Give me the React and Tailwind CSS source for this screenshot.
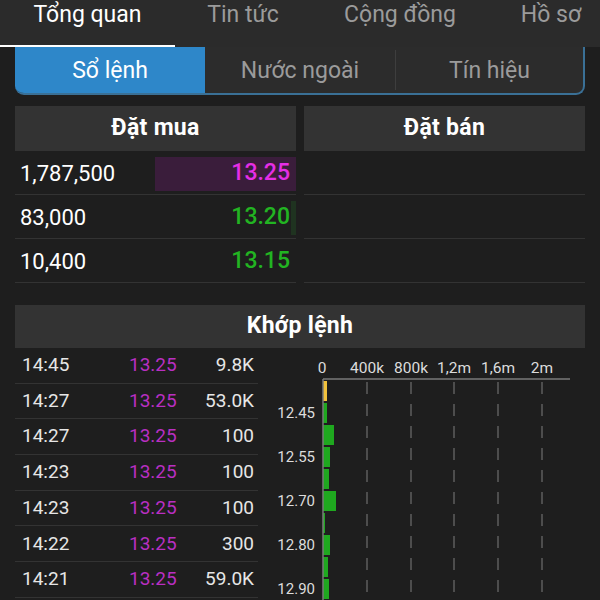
import React from "react";

const navTabs = [
  { label: "Tổng quan", w: "w-[175px]", active: true },
  { label: "Tin tức", w: "w-[136px]" },
  { label: "Cộng đồng", w: "w-[178px]" },
  { label: "Hồ sơ", w: "w-[124px]" },
];

const trades = [
  ["14:45", "13.25", "9.8K"],
  ["14:27", "13.25", "53.0K"],
  ["14:27", "13.25", "100"],
  ["14:23", "13.25", "100"],
  ["14:23", "13.25", "100"],
  ["14:22", "13.25", "300"],
  ["14:21", "13.25", "59.0K"],
];

function Chart() {
  const ticks = [
    ["0", 64],
    ["400k", 109],
    ["800k", 153],
    ["1,2m", 196],
    ["1,6m", 240],
    ["2m", 284],
  ];
  const widths = [4, 4, 11, 7, 6, 13, 2, 7, 5, 6];
  const labels = { 1: "12.45", 3: "12.55", 5: "12.70", 7: "12.80", 9: "12.90" };
  return (
    <svg width="342" height="253" viewBox="0 0 342 253" className="block">
      {ticks.map(([t, x]) => (
        <text key={t} x={x} y={25} textAnchor="middle" fontSize="15.5" fill="#dcdcdc" fontFamily="Roboto, sans-serif">
          {t}
        </text>
      ))}
      <line x1="65" y1="31" x2="312" y2="31" stroke="#7a7a7a" strokeWidth="1.5" />
      {ticks.slice(1).map(([t, x]) => (
        <line key={t} x1={x} y1="34" x2={x} y2="253" stroke="#5e5e5e" strokeWidth="1.5" strokeDasharray="12 10" />
      ))}
      {widths.map((w, i) => (
        <rect
          key={i}
          x="65"
          y={33 + i * 22}
          width={w}
          height="20"
          fill={i === 0 ? "#f2c23c" : "#1fa81f"}
        />
      ))}
      <line x1="65" y1="31" x2="65" y2="253" stroke="#7a7a7a" strokeWidth="1.5" />
      {Object.entries(labels).map(([i, t]) => (
        <text
          key={t}
          x="57"
          y={33 + Number(i) * 22 + 15}
          textAnchor="end"
          fontSize="15"
          fill="#dcdcdc"
          fontFamily="Roboto, sans-serif"
        >
          {t}
        </text>
      ))}
    </svg>
  );
}

export default function App() {
  return (
    <div className="w-[600px] h-[600px] overflow-hidden bg-[#1e1e1e] font-['Roboto',sans-serif] text-white">
      {/* top nav */}
      <div className="h-[47px] bg-[#2b2b2b] flex overflow-hidden">
        {navTabs.map((t) => (
          <div key={t.label} className={`${t.w} shrink-0 h-[47px] flex flex-col`}>
            <div
              className={`h-[45px] text-center text-[23px] leading-[29px] ${
                t.active ? "text-white" : "text-[#9b9b9b]"
              }`}
            >
              {t.label}
            </div>
            <div className={`h-[2px] ${t.active ? "bg-white" : ""}`} />
          </div>
        ))}
      </div>

      {/* segmented control */}
      <div className="mx-[15px] h-[48px] flex rounded-b-[9px] overflow-hidden bg-[#2c2c2c] border-r-2 border-b-2 border-[#3a7096]">
        <div className="w-[190px] bg-[#2e87c9] flex items-center justify-center pt-[3px] text-[23px] text-white">
          Sổ lệnh
        </div>
        <div className="w-[190px] flex items-center justify-center pt-[3px] text-[23px] text-[#9b9b9b]">
          Nước ngoài
        </div>
        <div className="w-[1px] my-[3px] bg-[#3e3e3e]" />
        <div className="flex-1 flex items-center justify-center pt-[3px] text-[23px] text-[#9b9b9b]">
          Tín hiệu
        </div>
      </div>

      {/* order book */}
      <div className="mx-[15px] mt-[11px] grid grid-cols-2 gap-x-[8px]">
        <div>
          <div className="h-[45px] bg-[#333333] flex items-center justify-center text-[23px] font-bold tracking-[0.3px]">
            Đặt mua
          </div>
          <div className="h-[44px] border-b border-[#333333] flex items-center justify-between pt-[2px]">
            <span className="pl-[5px] text-[22px]">1,787,500</span>
            <div className="w-[141px] h-[34px] bg-[#3a1d3b] flex items-center justify-end pr-[6px] text-[23px] font-medium text-[#e62ee6]">
              13.25
            </div>
          </div>
          <div className="h-[44px] border-b border-[#333333] flex items-center justify-between pt-[2px]">
            <span className="pl-[5px] text-[22px]">83,000</span>
            <div className="h-[34px] flex items-center">
              <span className="text-[23px] font-medium text-[#22b422] pr-[1px]">13.20</span>
              <div className="w-[5px] h-[34px] bg-[#1f3320]" />
            </div>
          </div>
          <div className="h-[44px] border-b border-[#333333] flex items-center justify-between pt-[2px]">
            <span className="pl-[5px] text-[22px]">10,400</span>
            <span className="pr-[6px] text-[23px] font-medium text-[#22b422]">13.15</span>
          </div>
        </div>
        <div>
          <div className="h-[45px] bg-[#333333] flex items-center justify-center text-[23px] font-bold tracking-[0.3px]">
            Đặt bán
          </div>
          <div className="h-[44px] border-b border-[#333333]" />
          <div className="h-[44px] border-b border-[#333333]" />
          <div className="h-[44px] border-b border-[#333333]" />
        </div>
      </div>

      {/* matched orders */}
      <div className="mx-[15px] mt-[22px] h-[43px] bg-[#333333] flex items-center justify-center text-[23px] font-bold tracking-[0.3px]">
        Khớp lệnh
      </div>
      <div className="flex">
        <div className="ml-[15px] w-[243px]">
          {trades.map(([time, price, vol], i) => (
            <div key={i} className="h-[35.7px] border-b border-[#333333] flex items-center text-[19px]">
              <span className="pl-[7px] w-[114px] text-[#e6e6e6]">{time}</span>
              <span className="w-[60px] text-[#b92fc2]">{price}</span>
              <span className="flex-1 text-right pr-[4px] text-[#e6e6e6]">{vol}</span>
            </div>
          ))}
        </div>
        <Chart />
      </div>
    </div>
  );
}
